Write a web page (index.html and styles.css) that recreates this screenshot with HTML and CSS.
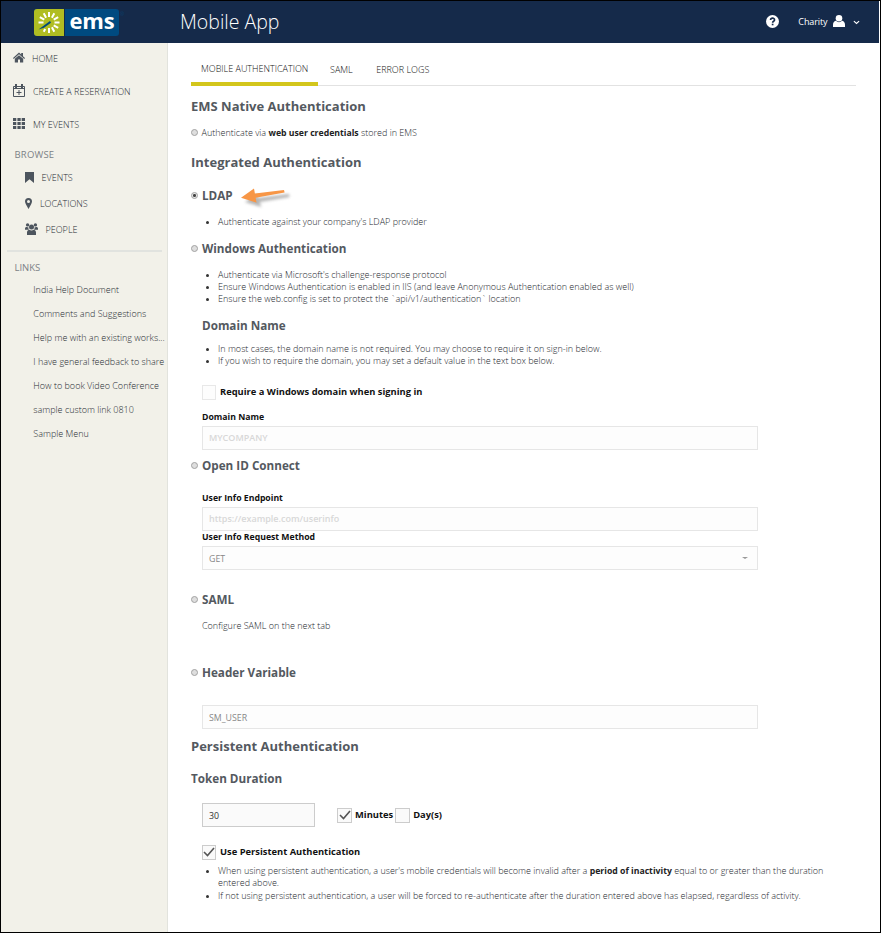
FILE: index.html
```html
<!DOCTYPE html>
<html lang="en">
<head>
<meta charset="utf-8">
<title>Mobile App</title>
<link rel="stylesheet" href="styles.css">
</head>
<body>
<div class="app">
  <header class="topbar">
    <div class="logo">
      <svg class="logo-mark" viewBox="0 0 30 27" width="30" height="27"><path d="M3 0H30V27H3a3 3 0 0 1-3-3V3a3 3 0 0 1 3-3z" fill="#b0bd22"/><g stroke="#fff" stroke-width="2"><path d="M15 3v5M15 19v5M20.300 4.300l-2.400 4.400M9.700 4.300l2.400 4.400M24.200 8.200l-4.500 2.500M5.800 8.200l4.500 2.500M25.500 13.500h-5M4.500 13.500h5M24.200 18.800l-4.500-2.500M20.300 22.700l-2.400-4.400M9.700 22.700l1.500-2.700"/></g><path d="M4.500 20.500L16 12l1 1.700-7 5z" fill="#004a7c"/></svg>
      <span class="logo-text">ems</span><span class="reg">®</span>
    </div>
    <h1 class="title">Mobile App</h1>
    <div class="user">
      <svg class="help" viewBox="0 0 12 12" width="13" height="13"><circle cx="6" cy="6" r="6" fill="#fff"/><path d="M4.200 4.600C4.300 2.300 7.900 2.300 7.900 4.500 7.900 5.800 6.100 5.800 6.100 7.100" fill="none" stroke="#152a4a" stroke-width="1.500"/><path d="M5.300 8h1.600v1.500H5.300z" fill="#152a4a"/></svg>
      <span class="user-name">Charity</span>
      <svg class="person" viewBox="0 0 12 12" width="12" height="12"><circle cx="6" cy="3.300" r="3.300" fill="#fff"/><path d="M0 12V9.800C0 7.300 1.500 6 3 5.800 4.500 7.600 7.500 7.600 9 5.800c1.500.2 3 1.500 3 4V12z" fill="#fff"/></svg>
      <svg class="chev" viewBox="0 0 8 5" width="7" height="5"><path d="M1 1l3 2.600L7 1" fill="none" stroke="#fff" stroke-width="1.300"/></svg>
    </div>
  </header>
  <div class="body">
    <nav class="side">
      <a class="nav"><svg viewBox="0 0 12 11" width="12" height="11"><path d="M6 .5L0 6l.7.900L6 2.300l5.300 4.600.7-.900-2-1.800V1H8.200v1.600zM6 3.200L1.800 6.800V10.500H5V7.500h2v3h3.200V6.800z"/></svg><span>HOME</span></a>
      <a class="nav"><svg viewBox="0 0 12 13" width="12" height="13"><path d="M.5 2.500h11v10H.5zM.5 4.500h11" fill="none" stroke="#4d555e" stroke-width="1"/><path d="M2 0h2v4H2zM8 0h2v4H8zM5.500 6h1v5h-1zM3.500 8h5v1h-5z"/></svg><span>CREATE A RESERVATION</span></a>
      <a class="nav"><svg viewBox="0 0 12 11" width="12" height="11"><path d="M0 0h3.300v3H0zM4.400 0h3.300v3H4.400zM8.700 0H12v3H8.700zM0 4h3.300v3H0zM4.400 4h3.300v3H4.400zM8.700 4H12v3H8.700zM0 8h3.300v3H0zM4.400 8h3.300v3H4.400zM8.700 8H12v3H8.700z"/></svg><span>MY EVENTS</span></a>
      <div class="group">BROWSE</div>
      <a class="sub sub-events"><svg viewBox="0 0 9 10" width="9" height="11" preserveAspectRatio="none"><path d="M0 0h9v10L4.500 6.500 0 10z"/></svg><span>EVENTS</span></a>
      <a class="sub sub-loc"><svg viewBox="0 0 7 11" width="7" height="11"><path fill-rule="evenodd" d="M3.500 0A3.500 3.500 0 0 0 0 3.500C0 5 1.500 7.500 3.500 11 5.500 7.500 7 5 7 3.500A3.500 3.500 0 0 0 3.500 0zm0 2a1.500 1.500 0 1 1 0 3 1.500 1.500 0 0 1 0-3z"/></svg><span>LOCATIONS</span></a>
      <a class="sub sub-people"><svg viewBox="0 0 13 12" width="13" height="12"><circle cx="2.600" cy="1.900" r="1.700"/><circle cx="10.400" cy="1.900" r="1.700"/><circle cx="6.500" cy="4" r="2.500"/><path d="M0 6.800V5.500C0 4.300 1 3.700 2 4c.6.300 1 .200 1.300 0 0 1.500.3 2 .7 2.800zM13 6.800V5.500c0-1.200-1-1.800-2-1.500-.6.300-1 .200-1.300 0 0 1.500-.3 2-.7 2.800zM2 12V9.500C2 7.500 3.300 6.700 4.200 6.700c1.500 1 3.100 1 4.600 0 .9 0 2.200.8 2.200 2.800V12z"/></svg><span>PEOPLE</span></a>
      <hr class="rule">
      <div class="group links-head">LINKS</div>
      <ul class="links">
        <li>India Help Document</li>
        <li>Comments and Suggestions</li>
        <li>Help me with an existing works...</li>
        <li>I have general feedback to share</li>
        <li>How to book Video Conference</li>
        <li>sample custom link 0810</li>
        <li>Sample Menu</li>
      </ul>
    </nav>
    <main class="main">
      <div class="tabs"><a class="tab active">MOBILE AUTHENTICATION</a><a class="tab">SAML</a><a class="tab">ERROR LOGS</a></div>
      <h2 class="mt8">EMS Native Authentication</h2>
      <label class="radio-text mt9"><i class="radio"></i><span>Authenticate via <b>web user credentials</b> stored in EMS</span></label>
      <h2 class="mt11">Integrated Authentication</h2>
      <h3 class="opt mt10"><i class="radio on"></i><span>LDAP</span>
        <svg class="arrow" viewBox="0 0 54 24" width="54" height="24"><path d="M5 15L17 7l1 4 31-4 .5 3-30 5 2 5z" class="arrow-shadow"/><path d="M1 10.700L14 1.500l.9 4.900L44 3l.6 2.600-29 5.100 1 5z" fill="#f79646"/></svg></h3>
      <ul class="list mt8"><li>Authenticate against your company's LDAP provider</li></ul>
      <h3 class="opt mt9"><i class="radio"></i><span>Windows Authentication</span></h3>
      <ul class="list mt8">
        <li>Authenticate via Microsoft's challenge-response protocol</li>
        <li>Ensure Windows Authentication is enabled in IIS (and leave Anonymous Authentication enabled as well)</li>
        <li>Ensure the web.config is set to protect the <span class="tick">`</span>api/v1/authentication<span class="tick">`</span> location</li>
      </ul>
      <h3 class="inset mt9">Domain Name</h3>
      <ul class="list mt5">
        <li>In most cases, the domain name is not required. You may choose to require it on sign-in below.</li>
        <li>If you wish to require the domain, you may set a default value in the text box below.</li>
      </ul>
      <div class="checks inset mt18"><i class="box off"></i><span>Require a Windows domain when signing in</span></div>
      <div class="label mt12">Domain Name</div>
      <div class="field mt3 hint">MYCOMPANY</div>
      <h3 class="opt mt4"><i class="radio"></i><span>Open ID Connect</span></h3>
      <div class="label mt14">User Info Endpoint</div>
      <div class="field mt3 hint">https://example.com/userinfo</div>
      <div class="label">User Info Request Method</div>
      <div class="field mt3">GET<i class="caret"></i></div>
      <h3 class="opt mt18"><i class="radio"></i><span>SAML</span></h3>
      <p class="note mt8">Configure SAML on the next tab</p>
      <h3 class="opt mt29"><i class="radio"></i><span>Header Variable</span></h3>
      <div class="field mt20">SM_USER</div>
      <h2 class="mt5">Persistent Authentication</h2>
      <h3 class="mt9">Token Duration</h3>
      <div class="duration inset mt12">
        <div class="field amount">30</div>
        <div class="checks"><i class="box wide"><svg viewBox="0 0 12 10" width="12" height="10"><path d="M1 5l3.500 3.500L11 1" /></svg></i><span>Minutes</span><i class="box wide second"></i><span>Day(s)</span></div>
      </div>
      <div class="checks inset mt18"><i class="box"><svg viewBox="0 0 12 10" width="12" height="10"><path d="M1 5l3.500 3.500L11 1" /></svg></i><span>Use Persistent Authentication</span></div>
      <ul class="list last mt6">
        <li>When using persistent authentication, a user's mobile credentials will become invalid after a <b>period of inactivity</b> equal to or greater than the duration entered above.</li>
        <li>If not using persistent authentication, a user will be forced to re-authenticate after the duration entered above has elapsed, regardless of activity.</li>
      </ul>
    </main>
  </div>
</div>
</body>
</html>
```
FILE: styles.css
```css
* { box-sizing: border-box; }
body { margin: 0; font: 300 9px/12px "Open Sans", sans-serif; color: #24282e; background: #fff; }
h1, h2, h3, p, ul { margin: 0; padding: 0; }
ul { list-style: none; }
svg { flex: none; }
b { font-weight: 700; font-size: 8.700px; line-height: 1; color: #222; }
.app { width: 881px; height: 933px; border: 1px solid #000; display: flex; flex-direction: column; overflow: hidden; }

.topbar { height: 42px; flex: none; background: #152a4a; color: #fff; display: flex; align-items: center; margin-right: 1px; }
.logo { margin-left: 33px; width: 85px; height: 27px; display: flex; background: #004a80; border-radius: 3px; position: relative; flex: none; }
.logo-mark { border-right: 1px solid #152a4a; box-sizing: content-box; }
.logo-text { font: 700 22px/23px "Open Sans", sans-serif; margin-left: 4.500px; letter-spacing: -.2px; }
.reg { position: absolute; left: 86px; top: -1px; font-size: 5px; color: #004a80; }
.title { margin-left: 61px; font-weight: 300; font-size: 19.500px; line-height: 24px; }
.user { margin-left: auto; display: flex; align-items: center; padding-right: 19px; }
.user-name { margin: 0 5.500px 0 19.500px; font-weight: 400; letter-spacing: -.1px; }
.person { margin-top: -2px; }
.chev { margin: 1px 0 0 8px; }
.help { margin-top: -2px; }

.body { display: flex; flex: 1; min-height: 0; }
.side { width: 167px; flex: none; background: #f2f1e9; border-right: 1px solid #e2e3dd; color: #262c33; fill: #4d555e; }
.nav { display: flex; align-items: center; height: 33px; padding-left: 12px; gap: 8px; }
.nav svg { margin-top: -2px; }
.nav:first-child { height: 32px; gap: 7px; padding-bottom: 1px; }
.group { font-weight: 400; color: #7c8186; padding-left: 13.500px; height: 28px; line-height: 28px; font-size: 9.500px; }
.nav + .group { letter-spacing: .2px; }
.sub { display: flex; align-items: center; height: 26px; padding-left: 24px; }
.group + .sub { margin-top: -4px; }
.sub-events { gap: 7.500px; }
.sub-loc { gap: 8px; }
.sub-people { gap: 7.500px; }
.sub svg { margin-top: -2px; }
.rule { border: 0; height: 2px; background: #e1e3df; margin: 7px 5px 0 6px; }
.links-head { margin-top: 2px; }
.links li { height: 24px; line-height: 24px; padding-left: 32.300px; white-space: nowrap; }
.links { margin-top: -4px; }

.main { flex: 1; padding: 0 0 0 23px; }
.tabs { display: flex; height: 43px; width: 665px; border-bottom: 1px solid #e2e2e2; line-height: 53px; color: #111; }
.tab { height: 43px; padding: 0 11.500px 0 12px; }
.tab.active { width: 127px; padding: 0 0 0 10px; border-bottom: 4px solid #d3c61c; line-height: 52px; }
h2, h3 { font-weight: 700; color: #54595f; height: 24px; line-height: 24px; }
h2 { font-size: 13px; }
h3 { font-size: 11.700px; line-height: 22px; padding-bottom: 2px; }
.opt { display: flex; align-items: center; }
.radio { width: 7px; height: 7px; border-radius: 50%; border: 1px solid #a2a2a2; background: #dedede; margin-right: 4px; flex: none; }
.opt .radio { margin-top: 1px; }
.radio.on { background: radial-gradient(circle, #444 0 1.200px, #e6e6e6 1.800px); }
.radio-text { display: flex; align-items: center; height: 12px; }
.radio-text .radio { margin: -1px 3.500px 0 0; }
.arrow { margin: 5px 0 -2px 7.500px; overflow: visible; }
.arrow-shadow { fill: #777; opacity: .55; filter: blur(1.500px); }
.list { padding-left: 27px; }
.list li { position: relative; }
.list li::before { content: ""; position: absolute; left: -12px; top: 5px; width: 3px; height: 3px; border-radius: 50%; background: #333; }
.tick { margin: 0 1.200px; }
.last li { width: 615px; }
.last li + li { margin-top: 1px; }
.inset { margin-left: 11px; }
.checks { display: flex; align-items: center; height: 14px; font-weight: 700; font-size: 9.350px; color: #111; }
.box { width: 14px; height: 15px; border: 1px solid #ccc; background: #fafafa; margin-right: 4px; flex: none; display: grid; place-items: center; }
.box.off { border-color: #e8e8e8; background: #fdfdfd; }
.box.wide { width: 15px; margin-right: 3px; }
.box.second { margin-left: 2px; }
.box path { fill: none; stroke: #555; stroke-width: 1.600; }
.label { margin-left: 11px; font-weight: 700; font-size: 8.700px; color: #111; height: 12px; }
.field { margin-left: 11px; width: 556px; height: 24px; border: 1px solid #e6e6e6; background: #fdfdfd; line-height: 24px; padding-left: 6px; color: #888; font-weight: 400; font-size: 8.800px; display: flex; justify-content: space-between; }
.hint { color: #d8d8d8; font-weight: 600; font-size: 9px; line-height: 21px; }
.caret { align-self: center; margin-right: 9px; border: 3px solid transparent; border-top: 2px solid #999; border-bottom: 0; }
.duration { display: flex; align-items: center; gap: 22px; }
.duration .amount { margin: 0; width: 113px; border-color: #ccc; background: #fafafa; color: #333; }
.note { margin-left: 11px; }
.mt3 { margin-top: 3px; } .mt4 { margin-top: 4px; } .mt5 { margin-top: 5px; } .mt6 { margin-top: 6px; }
.mt8 { margin-top: 8px; } .mt9 { margin-top: 9px; } .mt10 { margin-top: 10px; } .mt11 { margin-top: 11px; }
.mt12 { margin-top: 12px; } .mt14 { margin-top: 14px; } .mt18 { margin-top: 18px; } .mt20 { margin-top: 20px; } .mt29 { margin-top: 29px; }
```
